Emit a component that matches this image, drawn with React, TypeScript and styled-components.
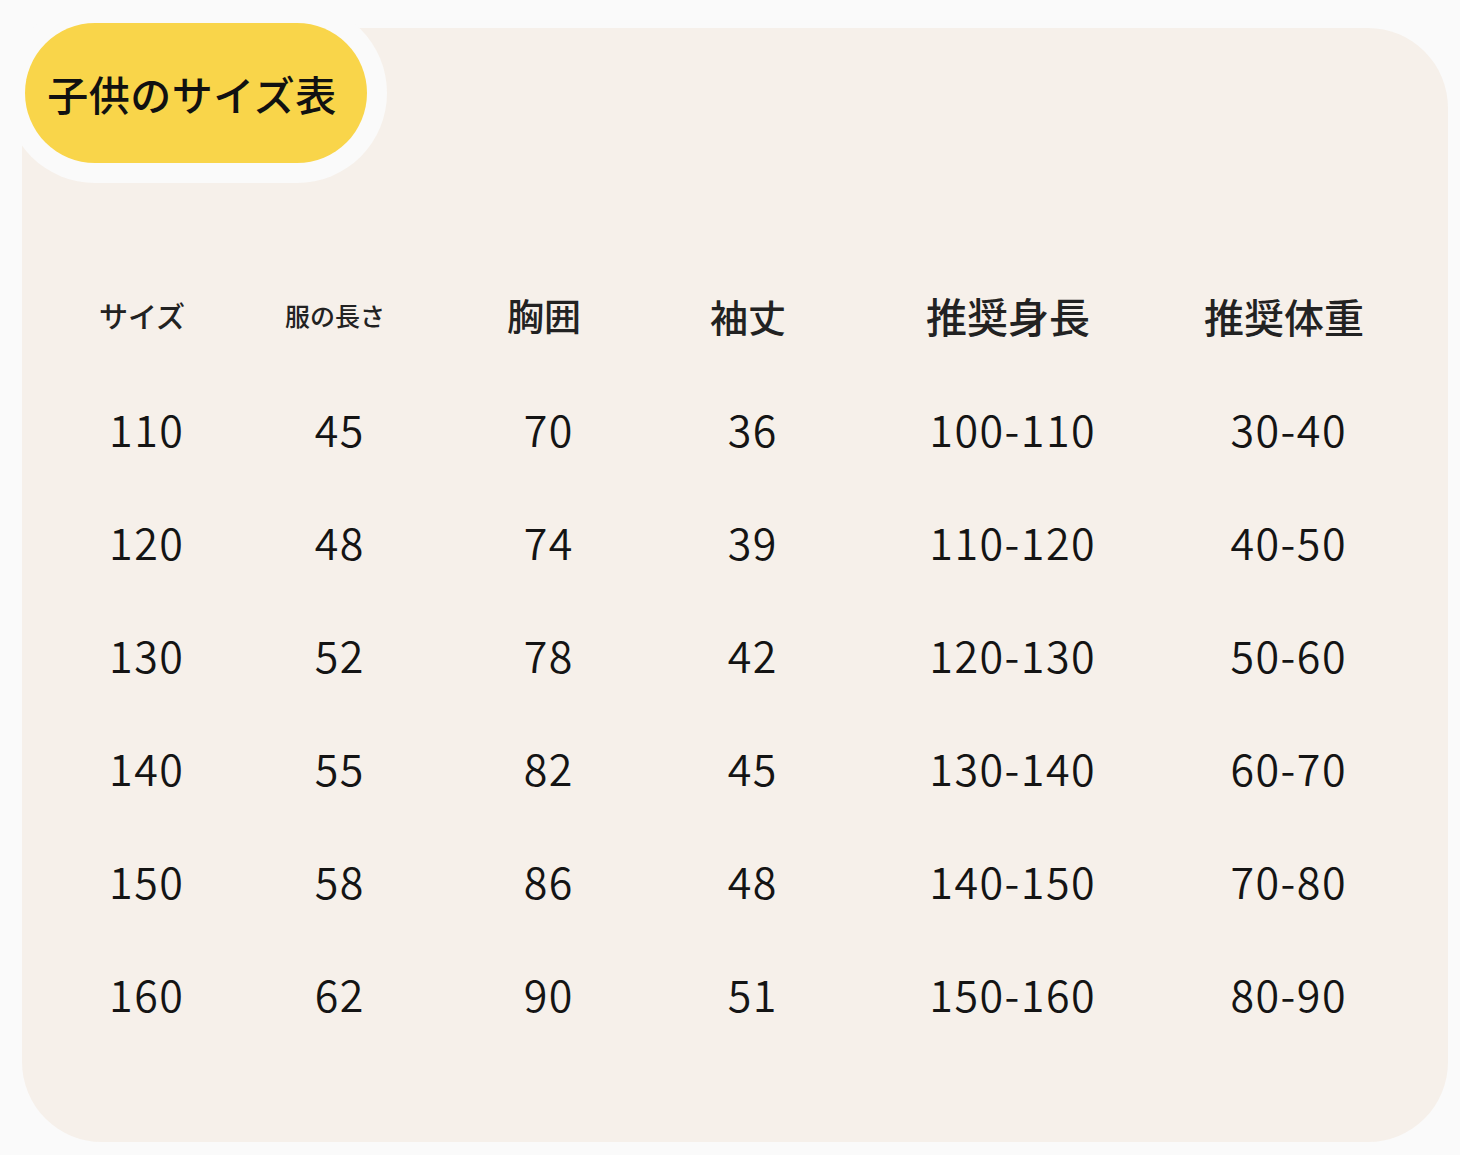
import React from 'react';
import styled, { createGlobalStyle } from 'styled-components';

const GlobalStyle = createGlobalStyle`
  html, body {
    margin: 0;
    padding: 0;
    background: #fafafa;
  }
  body {
    font-family: 'Noto Sans CJK JP', 'Noto Sans', sans-serif;
    color: #1f1f1f;
  }
`;

const Page = styled.main`
  width: 1460px;
  height: 1155px;
  box-sizing: border-box;
  padding: 28px 12px 0 22px;
  overflow: hidden;
`;

const Card = styled.section`
  position: relative;
  box-sizing: border-box;
  width: 1426px;
  height: 1114px;
  padding: 231px 0 0 24px;
  background: #f6f0ea;
  border-radius: 80px;
`;

const TitlePill = styled.h1`
  position: absolute;
  left: 3px;
  top: -5px;
  margin: 0;
  width: 342px;
  height: 140px;
  box-sizing: border-box;
  padding-right: 8px;
  display: flex;
  align-items: center;
  justify-content: center;
  background: #f9d54a;
  border-radius: 70px;
  box-shadow: 0 0 0 20px #fafafa;
  font-size: 41px;
  font-weight: 500;
  color: #111;
  letter-spacing: 0.5px;
`;

const Table = styled.div`
  display: grid;
  grid-template-columns: 200px 186px 232px 176px 344px 208px;
  grid-auto-rows: 113px;
  align-items: center;
`;

const HeadCell = styled.div<{ $size: number }>`
  text-align: center;
  padding-right: 8px;
  font-size: ${(p) => p.$size}px;
  font-weight: 500;
  color: #222;
  line-height: 1;
`;

const Cell = styled.div`
  text-align: center;
  padding-left: 1.5px;
  font-size: 43px;
  font-weight: 350;
  letter-spacing: 1.5px;
  color: #141414;
  line-height: 1;
`;

const headers: [string, number][] = [
  ['サイズ', 29],
  ['服の長さ', 25],
  ['胸囲', 37],
  ['袖丈', 38],
  ['推奨身長', 41],
  ['推奨体重', 40],
];

const rows = [
  ['110', '45', '70', '36', '100-110', '30-40'],
  ['120', '48', '74', '39', '110-120', '40-50'],
  ['130', '52', '78', '42', '120-130', '50-60'],
  ['140', '55', '82', '45', '130-140', '60-70'],
  ['150', '58', '86', '48', '140-150', '70-80'],
  ['160', '62', '90', '51', '150-160', '80-90'],
];

const App: React.FC = () => {
  return (
    <Page>
      <GlobalStyle />
      <Card>
        <TitlePill>子供のサイズ表</TitlePill>
        <Table>
          {headers.map(([label, size]) => (
            <HeadCell key={label} $size={size}>{label}</HeadCell>
          ))}
          {rows.map((row) =>
            row.map((value, i) => <Cell key={`${row[0]}-${i}`}>{value}</Cell>)
          )}
        </Table>
      </Card>
    </Page>
  );
};

export default App;
